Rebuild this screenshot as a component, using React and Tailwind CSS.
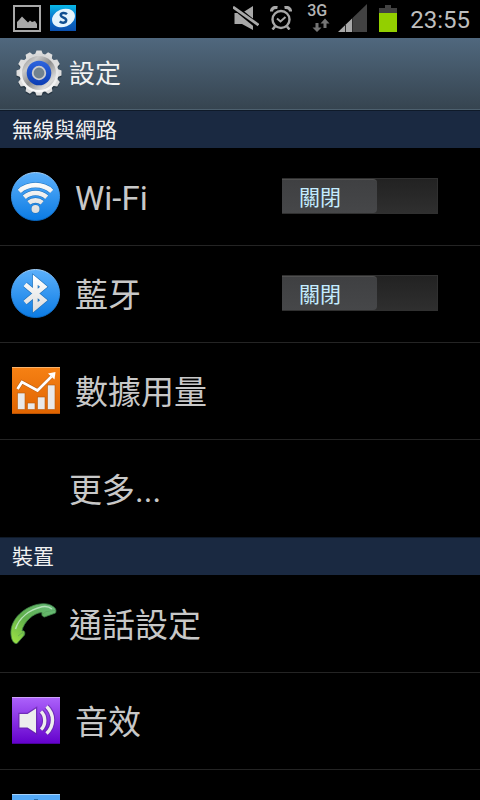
import { useState } from "react";

function PictureIcon() {
  return (
    <svg className="h-[27px] w-7" viewBox="0 0 28 27" aria-hidden="true">
      <rect x="1" y="1" width="26" height="25" fill="#000" stroke="#a8a8a8" strokeWidth="2" />
      <path d="M4 23V17L6 15L9 11.500L12 14.500L15 17.500L17 15.500L19 17L22 16L24 19V23Z" fill="#a8a8a8" />
    </svg>
  );
}

function BankIcon() {
  return (
    <svg className="h-[26px] w-[26px]" viewBox="0 0 26 26" aria-hidden="true">
      <defs>
        <linearGradient id="bank" x1="0" y1="0" x2="0" y2="1">
          <stop offset="0" stopColor="#08b9e8" />
          <stop offset="0.5" stopColor="#0a72cc" />
          <stop offset="1" stopColor="#0a4fae" />
        </linearGradient>
      </defs>
      <rect width="26" height="26" fill="url(#bank)" />
      <ellipse cx="13.500" cy="13" rx="11.800" ry="8.800" transform="rotate(-22 13.500 13)" fill="#e4f4fd" />
      <path
        d="M17 9.200C15 7.200 10.500 7.600 10.800 10.300C11.100 12.900 16.400 12.500 16.200 15.400C16 18.200 11.600 18.400 9.800 16.400"
        fill="none"
        stroke="#104f91"
        strokeWidth="2.500"
      />
    </svg>
  );
}

function MuteIcon() {
  return (
    <svg className="h-6 w-[26px]" viewBox="0 0 26 24" aria-hidden="true">
      <path d="M1.500 7H9L20 0V24L9 18H1.500Z" fill="#a8a8a8" />
      <path d="M0 0L26 21" stroke="#000" strokeWidth="5.600" />
      <path d="M0 1L25.500 19" stroke="#a8a8a8" strokeWidth="2.800" />
    </svg>
  );
}

function AlarmIcon() {
  return (
    <svg className="h-6 w-[22px]" viewBox="0 0 22 24" aria-hidden="true" fill="none" stroke="#a8a8a8">
      <circle cx="11" cy="13.500" r="8.500" strokeWidth="2.400" />
      <path d="M7 12.500L10.500 15.500L15.500 11" strokeWidth="2" />
      <path d="M1.500 5.500C1.500 2.500 4 1 7.500 1.500M20.500 5.500C20.500 2.500 18 1 14.500 1.500" strokeWidth="3.200" />
      <path d="M5 20.500L2.500 23.500M17 20.500L19.500 23.500" strokeWidth="2.600" />
    </svg>
  );
}

function DataArrowsIcon() {
  return (
    <svg className="h-[14px] w-[18px]" viewBox="0 0 18 14" aria-hidden="true" fill="#747474">
      <path d="M3.500 5H6.500V9.500H9.500L5 14L0.500 9.500H3.500Z" />
      <path d="M11.500 10H14.500V5.500H17.500L13 0.500L8.500 5.500H11.500Z" />
    </svg>
  );
}

function SignalIcon() {
  return (
    <svg className="h-7 w-[29px]" viewBox="0 0 29 28" aria-hidden="true">
      <path d="M29 0V28H14V14.500Z" fill="#424242" />
      <path d="M14 14.500V28H0Z" fill="#a8a8a8" />
      <path d="M7.500 20V28M14.500 14V28" stroke="#2c2c2c" strokeWidth="1" />
    </svg>
  );
}

function BatteryIcon() {
  return (
    <svg className="h-[27px] w-[18px]" viewBox="0 0 18 27" aria-hidden="true">
      <path d="M6 0H12V3H18V9H0V3H6Z" fill="#424242" />
      <rect y="8" width="18" height="19" fill="#93cf00" />
    </svg>
  );
}

const TEETH = [0, 30, 60, 90, 120, 150, 180, 210, 240, 270, 300, 330];

function GearIcon() {
  return (
    <svg className="h-12 w-12" viewBox="0 0 48 48" aria-hidden="true">
      <defs>
        <linearGradient id="gearOuter" x1="0" y1="0" x2="0" y2="1">
          <stop offset="0" stopColor="#d6d6d6" />
          <stop offset="1" stopColor="#fafafa" />
        </linearGradient>
        <linearGradient id="gearRing" x1="0" y1="0" x2="1" y2="1">
          <stop offset="0" stopColor="#8a8a8a" />
          <stop offset="0.25" stopColor="#c9c9c9" />
          <stop offset="0.5" stopColor="#8d8d8d" />
          <stop offset="0.8" stopColor="#dcdcdc" />
          <stop offset="1" stopColor="#8f8f8f" />
        </linearGradient>
        <linearGradient id="gearBlue" x1="0" y1="0" x2="0" y2="1">
          <stop offset="0" stopColor="#2f65de" />
          <stop offset="1" stopColor="#0a3cb4" />
        </linearGradient>
      </defs>
      <g fill="#1c2a35" opacity="0.600" transform="translate(0 1.500)">
        <circle cx="24" cy="24" r="20" />
        {TEETH.map((a) => (
          <path key={a} d="M20 6L21.500 1.500H26.500L28 6Z" transform={`rotate(${a} 24 24)`} />
        ))}
      </g>
      <g fill="#dedede">
        {TEETH.map((a) => (
          <path key={a} d="M19.800 6L21.500 1.500H26.500L28.200 6Z" transform={`rotate(${a} 24 24)`} />
        ))}
      </g>
      <circle cx="24" cy="24" r="19.500" fill="url(#gearOuter)" />
      <circle cx="24" cy="24" r="17" fill="url(#gearRing)" />
      <circle cx="24" cy="24" r="12.300" fill="url(#gearBlue)" />
      <circle cx="24" cy="24" r="6.300" fill="#71828f" stroke="#cccccc" strokeWidth="1.800" />
    </svg>
  );
}

function BlueDisc({ children }) {
  return (
    <svg className="h-[49px] w-[49px]" viewBox="0 0 49 49" aria-hidden="true">
      <defs>
        <linearGradient id="disc" x1="0" y1="0" x2="0" y2="1">
          <stop offset="0" stopColor="#5cb0fb" />
          <stop offset="1" stopColor="#0b7be4" />
        </linearGradient>
        <linearGradient id="discEdge" x1="0" y1="0" x2="0" y2="1">
          <stop offset="0" stopColor="#a5d2fb" />
          <stop offset="0.3" stopColor="#4ca3f4" />
          <stop offset="1" stopColor="#0867c2" />
        </linearGradient>
        <linearGradient id="glyph" gradientUnits="userSpaceOnUse" x1="0" y1="8" x2="0" y2="42">
          <stop offset="0" stopColor="#ffffff" />
          <stop offset="1" stopColor="#dcdcdc" />
        </linearGradient>
      </defs>
      <circle cx="24.500" cy="24.500" r="24" fill="url(#disc)" stroke="url(#discEdge)" />
      {children}
    </svg>
  );
}

function WifiGlyph({ color, width }) {
  return (
    <g fill="none" stroke={color} strokeWidth={width}>
      <path d="M8.300 19.300C17 11.100 32 11.100 40.700 19.300" />
      <path d="M13.300 25.300C19.500 19.500 29.500 19.500 35.700 25.300" />
      <path d="M17.800 30.800C21.500 27.600 27.500 27.600 31.200 30.800" />
      <circle cx="24.500" cy="37" r={width / 2 + 1.7} fill={color} stroke="none" />
    </g>
  );
}

function WifiIcon() {
  return (
    <BlueDisc>
      <WifiGlyph color="#1f70b8" width={5.6} />
      <WifiGlyph color="url(#glyph)" width={4.600} />
    </BlueDisc>
  );
}

function BluetoothIcon() {
  const shape = "M14 15.500L32.800 31.200L24.300 38.300V10.700L32.800 17.800L14 33.500";
  return (
    <BlueDisc>
      <path d={shape} fill="none" stroke="#1f70b8" strokeWidth="6" strokeMiterlimit="10" />
      <path d={shape} fill="none" stroke="url(#glyph)" strokeWidth="4.800" strokeMiterlimit="10" />
    </BlueDisc>
  );
}

function DataUsageIcon() {
  return (
    <svg className="h-[47px] w-12" viewBox="0 0 48 47" aria-hidden="true">
      <defs>
        <linearGradient id="orange" x1="0" y1="0" x2="0" y2="1">
          <stop offset="0" stopColor="#f68114" />
          <stop offset="1" stopColor="#e06400" />
        </linearGradient>
      </defs>
      <rect width="48" height="47" fill="url(#orange)" />
      <path d="M0 0.500H48" stroke="#fbb36b" />
      <path d="M0 46.500H48" stroke="#b95204" />
      <g fill="#e9e9e9" stroke="#b65a10" strokeWidth="0.600">
        <rect x="5.500" y="26" width="7.500" height="16.500" />
        <rect x="15.500" y="36" width="7.500" height="6.500" />
        <rect x="25.500" y="30" width="7.500" height="12.500" />
        <rect x="35.500" y="18" width="7.500" height="24.500" />
      </g>
      <path d="M5.500 22L10 15L25.500 23.500L39.500 9.500" fill="none" stroke="#b65a10" strokeWidth="3.800" />
      <path d="M5.500 22L10 15L25.500 23.500L39.500 9.500" fill="none" stroke="#fff" strokeWidth="2.800" />
      <path d="M36 6.500L43.500 5L42.500 12.500Z" fill="#fff" />
    </svg>
  );
}

function PhoneIcon() {
  return (
    <svg className="h-[43px] w-[47px]" viewBox="0 0 47 43" aria-hidden="true">
      <defs>
        <linearGradient id="phone" x1="1" y1="0" x2="0.100" y2="1">
          <stop offset="0" stopColor="#68bd80" />
          <stop offset="0.550" stopColor="#5fae4b" />
          <stop offset="1" stopColor="#9ae044" />
        </linearGradient>
      </defs>
      <path
        d="M1 33C-0.500 20 10 9 21 4.500C29 1 38 0.500 43 4.500C46 6.500 46.500 8.500 45.500 11L34.500 15C32 14.500 31.500 13 32 10.500C24 10.500 13.500 20 12 29C14 28 15.500 30 14.500 33L7 41.500C4 42 1.500 38.500 1 33Z"
        fill="url(#phone)"
        stroke="#3f8048"
        strokeWidth="0.800"
      />
      <path d="M5.500 27C9 16 19 8 32 4.800C36 4 39 4.500 42 7" fill="none" stroke="#c3eac8" strokeWidth="1.500" opacity="0.850" />
      <path d="M33 12L36 9.500L45 8.500M8 34L12.500 30.500L14 33" fill="none" stroke="#58a05c" strokeWidth="1" opacity="0.600" />
    </svg>
  );
}

function SoundIcon() {
  const body = "M7.500 17H15.500L24 11.500V36L15.500 30.500H7.500Z";
  const waves = "M29 14.500C34 19 34 28 29 32.500M34.500 9.500C42.500 17 42.500 29 34.500 36.500";
  return (
    <svg className="h-[47px] w-12" viewBox="0 0 48 47" aria-hidden="true">
      <defs>
        <linearGradient id="purple" x1="0" y1="0" x2="0" y2="1">
          <stop offset="0" stopColor="#ad63fb" />
          <stop offset="1" stopColor="#6300cc" />
        </linearGradient>
      </defs>
      <rect width="48" height="47" fill="url(#purple)" />
      <path d="M0 0.500H48" stroke="#cfa2fc" />
      <path d="M0 46.500H48" stroke="#4b039b" />
      <g fill="none" stroke="#6425a6" opacity="0.700">
        <path d={body} strokeWidth="2.500" />
        <path d={waves} strokeWidth="5.500" />
      </g>
      <path d={body} fill="#ededed" />
      <path d={waves} fill="none" stroke="#ededed" strokeWidth="3.400" />
    </svg>
  );
}

function DisplayIcon() {
  return (
    <svg className="h-[47px] w-12" viewBox="0 0 48 47" aria-hidden="true">
      <rect width="48" height="47" fill="#53a9f7" />
      <path d="M0 0.500H48" stroke="#a5d2fb" />
      <circle cx="24" cy="23.500" r="10" fill="#ededed" />
      <path d="M24 5V9M24 38V42M5.500 23.500H9.500M38.500 23.500H42.500" stroke="#286fae" strokeWidth="4" />
    </svg>
  );
}

function SectionHeader({ children }) {
  return (
    <h2 className="flex h-[39px] shrink-0 items-center border-t border-b border-t-[#0f1a29] border-b-black bg-[#1a2941] px-3 text-[21px] leading-6 text-[#f0f0f0]">
      {children}
    </h2>
  );
}

function LinkRow({ icon, label, name, tight, last }) {
  return (
    <li className={`h-[97px] shrink-0 ${last ? "" : "border-b border-[#242424]"}`}>
      <button type="button" aria-label={name} className="flex h-full w-full items-center text-left">
        <span className={`flex shrink-0 items-center pb-0.5 ${tight ? "w-[69px] pl-[10px]" : "w-[75px] pl-3"}`}>{icon}</span>
        <span className="pt-1">{label}</span>
      </button>
    </li>
  );
}

function SwitchRow({ id, icon, label }) {
  const [on, setOn] = useState(false);
  return (
    <li className="relative flex h-[97px] shrink-0 items-center border-b border-[#242424] pr-[42px]">
      <span className="flex w-[75px] shrink-0 items-center pb-0.5 pl-[11px]">{icon}</span>
      <label htmlFor={id} className="grow pt-1">
        {label}
      </label>
      <input id={id} type="checkbox" role="switch" className="sr-only" checked={on} onChange={() => setOn(!on)} />
      <span className="pb-0.5">
        <label
          htmlFor={id}
          className={`flex h-9 w-[156px] border-y border-r border-[#303030] bg-linear-to-b from-[#222] to-[#2f2f2f] ${on ? "justify-end" : "justify-start"}`}
        >
          <span className="flex w-[95px] items-center rounded-r-sm border-t border-[#505050] bg-linear-to-b from-[#3f4042] to-[#464749] pt-0.5 pl-[17px] text-[21px] leading-6 text-[#c4ecff]">
            {on ? "開啟" : "關閉"}
          </span>
        </label>
      </span>
    </li>
  );
}

export default function App() {
  return (
    <div
      lang="zh-Hant"
      className="flex h-screen w-full flex-col overflow-hidden bg-black font-[Roboto,'Noto_Sans_CJK_TC',sans-serif] text-[#c8c8c8]"
    >
      <div className="flex h-[38px] shrink-0 items-center justify-between pr-[10px] pb-0.5 pl-[13px]">
        <div className="flex items-center gap-[9px]">
          <PictureIcon />
          <BankIcon />
        </div>
        <div className="flex items-center">
          <MuteIcon />
          <span className="w-[11px]" />
          <AlarmIcon />
          <div className="ml-[15px] flex w-[23px] flex-col">
            <span className="text-base leading-[14px] font-medium text-[#b4b4b4]">3G</span>
            <span className="flex justify-end">
              <DataArrowsIcon />
            </span>
          </div>
          <span className="w-2" />
          <SignalIcon />
          <span className="w-3" />
          <BatteryIcon />
          <time className="ml-[13px] pt-1 text-2xl leading-8 text-[#bebebe]">23:55</time>
        </div>
      </div>

      <header className="flex h-[72px] shrink-0 items-center border-b border-[#4d606e] bg-linear-to-b from-[#50687e] to-[#364450] pl-[15px]">
        <span className="pb-0.5">
          <GearIcon />
        </span>
        <h1 className="ml-[6px] text-[26px] leading-8 text-[#f2f2f2]">設定</h1>
      </header>

      <main className="flex min-h-0 grow flex-col overflow-hidden text-[33px] leading-10">
        <SectionHeader>無線與網路</SectionHeader>
        <ul>
          <SwitchRow id="wifi" icon={<WifiIcon />} label="Wi-Fi" />
          <SwitchRow id="bluetooth" icon={<BluetoothIcon />} label="藍牙" />
          <LinkRow icon={<DataUsageIcon />} label="數據用量" />
          <LinkRow label="更多..." tight last />
        </ul>
        <SectionHeader>裝置</SectionHeader>
        <ul>
          <LinkRow icon={<PhoneIcon />} label="通話設定" tight />
          <LinkRow icon={<SoundIcon />} label="音效" />
          <LinkRow icon={<DisplayIcon />} name="顯示" />
        </ul>
      </main>
    </div>
  );
}
